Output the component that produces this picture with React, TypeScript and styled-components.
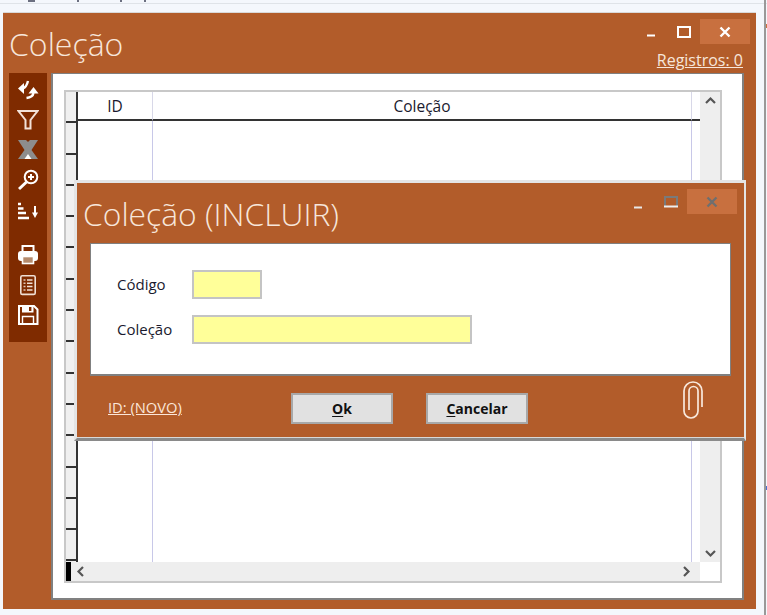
import React from "react";
import styled, { createGlobalStyle } from "styled-components";

const Global = createGlobalStyle`
  html, body { margin: 0; padding: 0; background: #f4f7fc; }
  * { box-sizing: border-box; }
`;
const Page = styled.div`
  position: relative; width: 767px; height: 615px; overflow: hidden;
  background: #f4f7fc; padding: 12px 11px 6px 3px;
  font-family: "Open Sans", "Liberation Sans", sans-serif;
`;
const TopEdge = styled.div`
  position: absolute; left: 0; top: 0; width: 100%; height: 4px; border-bottom: 1px solid #dfe3e8;
  display: flex; align-items: flex-start;
`;
const Scrap = styled.span<{ $x: number; $w: number }>`
  position: absolute; left: ${p => p.$x}px; top: 0; width: ${p => p.$w}px; height: 2px; background: #6b6f80;
`;
const RightEdge = styled.div`
  position: absolute; right: 1px; top: 0; width: 2px; height: 100%; background: #999;
`;
const Tick = styled.span<{ $y: number; $c: string }>`
  position: absolute; left: 2px; top: ${p => p.$y}px; width: 1px; height: 4px; background: ${p => p.$c};
`;
const Win = styled.div`
  width: 753px; height: 597px; background: #b25c2a;
  border-top: 1px solid #d9d9d9;
  display: flex; flex-direction: column; padding: 0 12px 9px 6px;
`;
const Head = styled.div`
  height: 60px; display: flex; justify-content: space-between; flex: none;
`;
const BigTitle = styled.div`
  font-weight: 300; font-size: 32px; line-height: 40px; color: #f7e6da; padding-top: 11px;
`;
const HeadRight = styled.div`
  display: flex; flex-direction: column; align-items: flex-end;
`;
const Controls = styled.div`
  display: flex; align-items: center; height: 25px; margin-top: 6px; margin-right: -6px;
`;
const CtrlBtn = styled.div<{ $dy?: number }>`
  width: 33px; height: 25px; display: flex; align-items: center; justify-content: center;
  padding-top: ${p => p.$dy ?? 0}px;
`;
const CloseBtn = styled.div`
  width: 50px; height: 25px; background: #c8703f; display: flex; align-items: center; justify-content: center;
`;
const Registros = styled.a`
  margin-top: 6px; margin-right: 1px; font-size: 16px; line-height: 20px; color: #f7e6da; text-decoration: underline;
`;
const Body = styled.div`
  flex: 1; display: flex; gap: 4px; min-height: 0;
`;
const Toolbar = styled.div`
  width: 38px; height: 269px; background: #7f2b00; flex: none;
  display: flex; flex-direction: column; align-items: center; padding-top: 2px;
`;
const ToolBtn = styled.div<{ $gap?: number }>`
  width: 38px; height: 30px; flex: none; margin-top: ${p => p.$gap ?? 0}px;
  display: flex; align-items: center; justify-content: center;
`;
const Panel = styled.div`
  flex: 1; background: #fff; border-top: 1px solid #808080; border-left: 2px solid #808080;
  border-right: 2px solid #808080; border-bottom: 2px solid #808080;
  padding: 16px 20px 15px 11px;
`;
const Grid = styled.div`
  height: 100%; border: 2px solid #c8c8c8; display: grid;
  grid-template-columns: 1fr 20px; grid-template-rows: 1fr 19px; background: #fff; min-height: 0;
`;
const Table = styled.div`
  display: flex; min-width: 0; min-height: 0; overflow: hidden;
`;
const RowHead = styled.div`
  width: 12px; flex: none; border-right: 2px solid #333; background: #f0f0f0;
`;
const RowMark = styled.div`
  height: 31.3px; border-bottom: 2px solid #333;
`;
const Cols = styled.div`
  flex: 1; display: grid; grid-template-columns: 75px 1fr 8px; grid-template-rows: 29px 1fr;
`;
const HeadCell = styled.div<{ $end?: boolean }>`
  font-size: 15.5px; color: #1a1a2e;
  display: flex; align-items: center; justify-content: center;
  border-bottom: 2px solid #333; border-right: ${p => (p.$end ? "none" : "1px solid #d8d8e8")};
`;
const Cell = styled.div<{ $end?: boolean }>`
  border-right: ${p => (p.$end ? "none" : "1px solid #c8c8e8")};
`;
const VBar = styled.div`
  background: #eee; display: flex; flex-direction: column; justify-content: space-between;
  align-items: center; padding: 4px 0 3px;
`;
const HBar = styled.div`
  background: #eee; display: flex; justify-content: space-between; align-items: center;
  padding: 0 8px 0 5px; margin-left: 5px; position: relative;
`;
const BlackCell = styled.div`
  position: absolute; left: -5px; top: 0; width: 5px; height: 19px; background: #000;
`;
const Corner = styled.div`
  background: #fff;
`;
const Dialog = styled.div`
  position: absolute; left: 74px; top: 180px; width: 672px; height: 261px;
  background: #b25c2a; border: 3px solid #e4e4e4; border-right-width: 2px; border-bottom-color: #8a8a8a;
  box-shadow: inset 0 -1px 0 #d8d8d8;
  padding: 0 13px; display: flex; flex-direction: column;
`;
const DialogHead = styled.div`
  height: 60px; flex: none; display: flex; justify-content: space-between;
`;
const DialogTitle = styled.div`
  font-weight: 300; font-size: 31.8px; line-height: 40px; color: #f7e6da; margin-left: -7px; padding-top: 11px;
`;
const DialogControls = styled.div`
  display: flex; margin-top: 6px; margin-right: -6px; height: 25px;
`;
const FormPanel = styled.div`
  height: 133px; flex: none; background: #fff; border-top: 1px solid #808080; border-left: 1px solid #808080;
  border-right: 1px solid #808080; border-bottom: 2px solid #808080;
  padding: 26px 0 0 26px; display: flex; flex-direction: column; gap: 16px;
`;
const FormRow = styled.div`
  display: flex; align-items: center; height: 29px;
`;
const Label = styled.label`
  width: 75px; font-size: 15px; color: #1a1a2e; padding-bottom: 2px;
`;
const Field = styled.div<{ $w: number }>`
  width: ${p => p.$w}px; height: 29px; background: #ffff99; border: 2px solid #c4c4c4;
`;
const Foot = styled.div`
  flex: 1; display: flex; align-items: center; padding: 3px 0 0 18px; position: relative;
`;
const IdLink = styled.a`
  width: 183px; font-size: 14.7px; color: #fbe6d8; text-decoration: underline; margin-top: -3px;
`;
const Btn = styled.button`
  width: 102px; height: 31px; background: #e1e1e1; border: 2px solid #a8a8a8;
  font-family: "Open Sans", "Liberation Sans", sans-serif; font-weight: 700; font-size: 14px;
  color: #111; padding: 0; margin-right: 33px;
  u { text-underline-offset: 2px; }
`;
const Clip = styled.div`
  position: absolute; right: 28px; top: 5px; line-height: 0;
`;

const W = "#fff";
const Min = ({ c = W }: { c?: string }) => (
  <svg width="10" height="10" viewBox="0 0 10 10"><path d="M1 8.5h8" stroke={c} strokeWidth="2" /></svg>
);
const Max = () => (
  <svg width="14" height="12" viewBox="0 0 14 12"><rect x="1" y="1" width="12" height="10" fill="none" stroke={W} strokeWidth="2" /></svg>
);
const X = ({ c = W }: { c?: string }) => (
  <svg width="12" height="12" viewBox="0 0 12 12"><path d="M1.5 1.5l9 9M10.5 1.5l-9 9" stroke={c} strokeWidth="2.4" /></svg>
);
const Chev = ({ d }: { d: "u" | "d" | "l" | "r" }) => {
  const p = { u: "M1 7l4.5-4.5L10 7", d: "M1 3l4.5 4.5L10 3", l: "M7 1L2.5 5.5 7 10", r: "M3 1l4.5 4.5L3 10" }[d];
  return <svg width="11" height="11" viewBox="0 0 11 11"><path d={p} fill="none" stroke="#555" strokeWidth="2.2" /></svg>;
};
const Ico = ({ children }: { children: React.ReactNode }) => (
  <svg width="22" height="22" viewBox="0 0 22 22" fill="none" stroke="#fff" strokeWidth="2">{children}</svg>
);

const rows = Array.from({ length: 15 });

export default function App() {
  return (
    <Page>
      <Global />
      <TopEdge>
        <Scrap $x={28} $w={7} />
        <Scrap $x={77} $w={2} />
        <Scrap $x={120} $w={2} />
        <Scrap $x={144} $w={2} />
      </TopEdge>
      <RightEdge>
        <Tick $y={24} $c="#c8703f" />
        <Tick $y={486} $c="#4a6fd0" />
      </RightEdge>
      <Win>
        <Head>
          <BigTitle>Coleção</BigTitle>
          <HeadRight>
            <Controls>
              <CtrlBtn><Min /></CtrlBtn>
              <CtrlBtn><Max /></CtrlBtn>
              <CloseBtn><X /></CloseBtn>
            </Controls>
            <Registros>Registros: 0</Registros>
          </HeadRight>
        </Head>
        <Body>
          <Toolbar>
            <ToolBtn>
              <Ico>
                <path d="M1 9.5l6-5.5v11z" fill="#fff" stroke="none" />
                <path d="M6 9.5c2.5-1 4-3.5 5-7.5" strokeWidth="2.4" />
                <path d="M16.5 8l5 6.5h-10z" fill="#fff" stroke="none" />
                <path d="M16.5 14c-.5 3-3 4.5-7 5" strokeWidth="2.4" />
              </Ico>
            </ToolBtn>
            <ToolBtn><Ico><path d="M1.5 2h19L13.5 11v8.5h-5V11z" stroke="#f3e2d8" /></Ico></ToolBtn>
            <ToolBtn>
              <Ico>
                <path d="M1 1h8l2 2 2-2h8l-6.5 10L21 20H1l6.5-9z" fill="#8d8d8d" stroke="none" />
                <path d="M7.5 20l3.5-5 3.5 5z" fill="#fff" stroke="none" />
              </Ico>
            </ToolBtn>
            <ToolBtn>
              <Ico>
                <circle cx="14" cy="8" r="6.3" />
                <path d="M9.5 13L2 20" strokeWidth="3" />
                <path d="M11 8h6M14 5v6" />
              </Ico>
            </ToolBtn>
            <ToolBtn>
              <Ico>
                <path d="M1 5h3M1 9.5h5.5M1 14h8M1 19h11" strokeWidth="2.6" />
                <path d="M18 7v7" />
                <path d="M15 13.5h6L18 19z" fill="#fff" stroke="none" />
              </Ico>
            </ToolBtn>
            <ToolBtn $gap={15}>
              <Ico>
                <path d="M5.5 7V2h11v5" />
                <rect x="1" y="7" width="20" height="10" rx="3" fill="#fff" stroke="none" />
                <rect x="5.5" y="12.5" width="11" height="7" fill="#b58a6c" stroke="#fff" strokeWidth="1.6" />
              </Ico>
            </ToolBtn>
            <ToolBtn>
              <Ico>
                <rect x="3.8" y="1.8" width="14.4" height="18.6" rx="1.5" stroke="#f0dfd4" strokeWidth="1.6" />
                <path d="M6.5 6h2M6.5 9.3h2M6.5 12.6h2M6.5 15.9h2" stroke="#e0c6b6" strokeWidth="1.5" />
                <path d="M10 6h5.5M10 9.3h5.5M10 12.6h5.5M10 15.9h5.5" stroke="#f0dfd4" strokeWidth="1.5" />
              </Ico>
            </ToolBtn>
            <ToolBtn>
              <Ico>
                <path d="M2 2h15l3.5 3.5V20H2z" />
                <rect x="5" y="2" width="11.5" height="6.5" fill="#fff" stroke="none" />
                <rect x="12" y="3" width="2.4" height="4" fill="#7f2b00" stroke="none" />
                <path d="M5.5 20v-7.5h11V20" strokeWidth="1.4" />
              </Ico>
            </ToolBtn>
          </Toolbar>
          <Panel>
            <Grid>
              <Table>
                <RowHead>
                  {rows.map((_, i) => <RowMark key={i} />)}
                </RowHead>
                <Cols>
                  <HeadCell>ID</HeadCell>
                  <HeadCell>Coleção</HeadCell>
                  <HeadCell $end />
                  <Cell />
                  <Cell />
                  <Cell $end />
                </Cols>
              </Table>
              <VBar><Chev d="u" /><Chev d="d" /></VBar>
              <HBar><BlackCell /><Chev d="l" /><Chev d="r" /></HBar>
              <Corner />
            </Grid>
          </Panel>
        </Body>
      </Win>
      <Dialog>
        <DialogHead>
          <DialogTitle>Coleção (INCLUIR)</DialogTitle>
          <DialogControls>
            <CtrlBtn $dy={5}><Min c="#e8e8e8" /></CtrlBtn>
            <CtrlBtn $dy={1}>
              <svg width="14" height="12" viewBox="0 0 14 12">
                <path d="M1 11V1h12v10" fill="none" stroke="#7a7a7a" strokeWidth="2" />
                <path d="M0 10.5h14" stroke="#eee" strokeWidth="2" />
              </svg>
            </CtrlBtn>
            <CloseBtn><X c="#6f6f6f" /></CloseBtn>
          </DialogControls>
        </DialogHead>
        <FormPanel>
          <FormRow><Label>Código</Label><Field $w={70} /></FormRow>
          <FormRow><Label>Coleção</Label><Field $w={280} /></FormRow>
        </FormPanel>
        <Foot>
          <IdLink>ID: (NOVO)</IdLink>
          <Btn><u>O</u>k</Btn>
          <Btn><u>C</u>ancelar</Btn>
          <Clip>
            <svg width="20" height="39" viewBox="0 0 20 39" fill="none" stroke="#f8e8dc" strokeWidth="1.7">
              <path d="M19 26V10a9 9 0 0 0-18 0v20a7 7 0 0 0 14 0V10a4.5 4.5 0 0 0-9 0v19" />
            </svg>
          </Clip>
        </Foot>
      </Dialog>
    </Page>
  );
}
